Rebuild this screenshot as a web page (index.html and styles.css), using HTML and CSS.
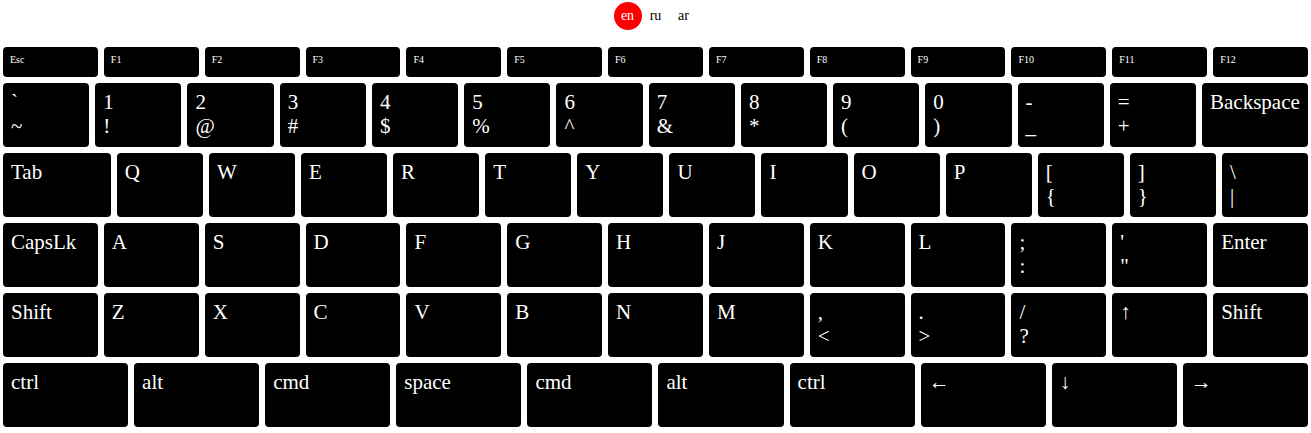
FILE: index.html
```html
<!DOCTYPE html>
<html>
<head>
<meta charset="utf-8">
<link rel="stylesheet" href="styles.css">
</head>
<body>
<div class="langs">
  <button class="lang active">en</button>
  <button class="lang">ru</button>
  <button class="lang">ar</button>
</div>
<div class="keyboard">
  <div class="row fn">
    <div class="key">Esc</div><div class="key">F1</div><div class="key">F2</div><div class="key">F3</div><div class="key">F4</div><div class="key">F5</div><div class="key">F6</div><div class="key">F7</div><div class="key">F8</div><div class="key">F9</div><div class="key">F10</div><div class="key">F11</div><div class="key">F12</div>
  </div>
  <div class="row">
    <div class="key"><span>`</span><span>~</span></div>
    <div class="key"><span>1</span><span>!</span></div>
    <div class="key"><span>2</span><span>@</span></div>
    <div class="key"><span>3</span><span>#</span></div>
    <div class="key"><span>4</span><span>$</span></div>
    <div class="key"><span>5</span><span>%</span></div>
    <div class="key"><span>6</span><span>^</span></div>
    <div class="key"><span>7</span><span>&amp;</span></div>
    <div class="key"><span>8</span><span>*</span></div>
    <div class="key"><span>9</span><span>(</span></div>
    <div class="key"><span>0</span><span>)</span></div>
    <div class="key"><span>-</span><span>_</span></div>
    <div class="key"><span>=</span><span>+</span></div>
    <div class="key backspace">Backspace</div>
  </div>
  <div class="row">
    <div class="key tab">Tab</div>
    <div class="key">Q</div><div class="key">W</div><div class="key">E</div><div class="key">R</div><div class="key">T</div><div class="key">Y</div><div class="key">U</div><div class="key">I</div><div class="key">O</div><div class="key">P</div>
    <div class="key"><span>[</span><span>{</span></div>
    <div class="key"><span>]</span><span>}</span></div>
    <div class="key"><span>\</span><span>|</span></div>
  </div>
  <div class="row">
    <div class="key">CapsLk</div>
    <div class="key">A</div><div class="key">S</div><div class="key">D</div><div class="key">F</div><div class="key">G</div><div class="key">H</div><div class="key">J</div><div class="key">K</div><div class="key">L</div>
    <div class="key"><span>;</span><span>:</span></div>
    <div class="key"><span>'</span><span>"</span></div>
    <div class="key">Enter</div>
  </div>
  <div class="row">
    <div class="key">Shift</div>
    <div class="key">Z</div><div class="key">X</div><div class="key">C</div><div class="key">V</div><div class="key">B</div><div class="key">N</div><div class="key">M</div>
    <div class="key"><span>,</span><span>&lt;</span></div>
    <div class="key"><span>.</span><span>&gt;</span></div>
    <div class="key"><span>/</span><span>?</span></div>
    <div class="key">↑</div>
    <div class="key">Shift</div>
  </div>
  <div class="row">
    <div class="key">ctrl</div><div class="key">alt</div><div class="key">cmd</div><div class="key">space</div><div class="key">cmd</div><div class="key">alt</div><div class="key">ctrl</div><div class="key">←</div><div class="key">↓</div><div class="key">→</div>
  </div>
</div>
</body>
</html>
```
FILE: styles.css
```css
body {
  margin: 0;
  background: #fff;
  font-family: "Liberation Serif", "Times New Roman", serif;
}

.langs {
  display: flex;
  justify-content: center;
  height: 47px;
  padding-top: 2px;
  box-sizing: border-box;
}

.lang {
  width: 28px;
  height: 28px;
  border: 0;
  padding: 0;
  border-radius: 50%;
  background: transparent;
  color: #000;
  font-family: "Liberation Serif", serif;
  font-size: 14px;
}

.lang.active {
  background: #f00;
  color: #fff;
}

.keyboard {
  display: flex;
  flex-direction: column;
  gap: 6px;
  padding: 0 3px;
}

.row {
  display: flex;
  gap: 6px;
}

.key {
  flex: 1 1 0;
  min-width: 0;
  height: 64px;
  box-sizing: border-box;
  padding: 7px 8px 6px;
  background: #000;
  color: #fff;
  border-radius: 4px;
  font-size: 21px;
  line-height: 24px;
  display: flex;
  flex-direction: column;
  white-space: nowrap;
}

.fn .key {
  height: 30px;
  font-size: 10px;
  line-height: 12px;
  padding: 7px 7px;
}

.backspace {
  flex-grow: 1.28;
}

.tab {
  flex-grow: 1.31;
}
```
